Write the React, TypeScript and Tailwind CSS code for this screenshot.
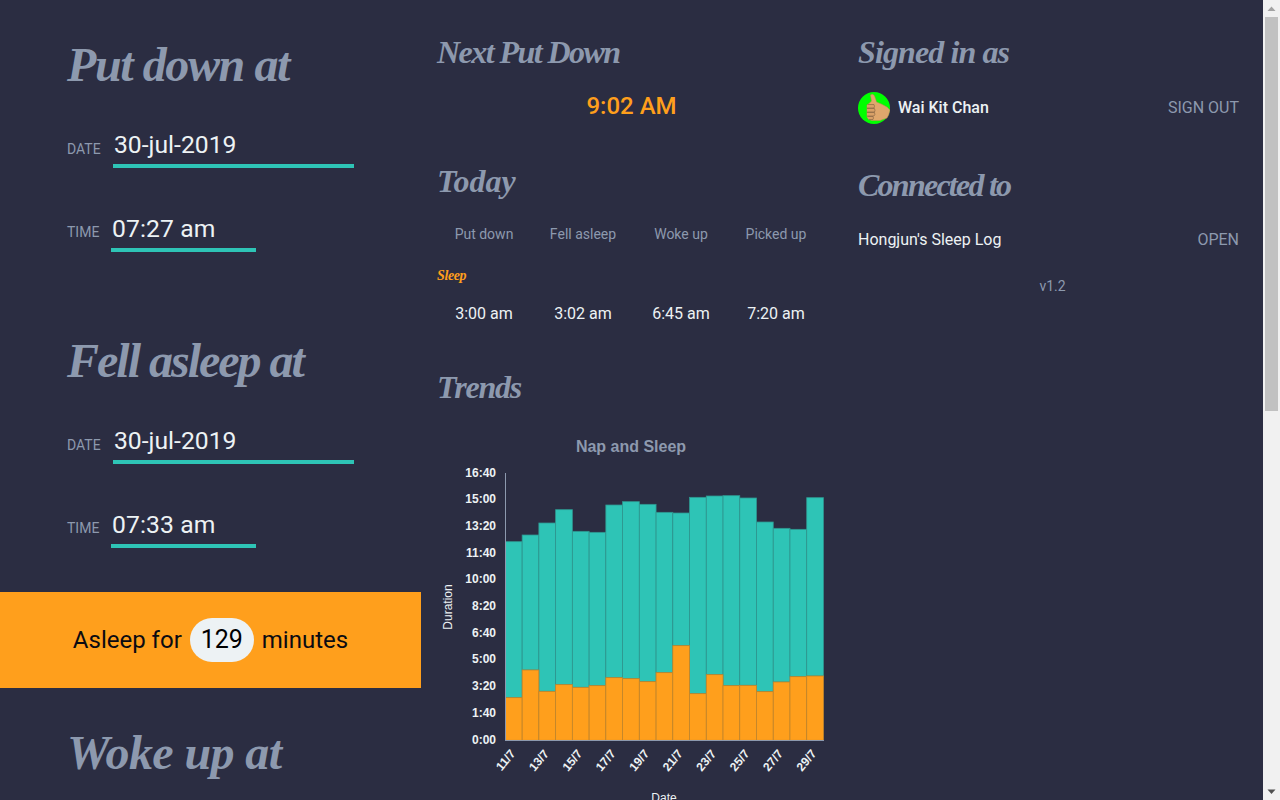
const heading = { fontFamily: '"Liberation Serif", serif' };
const body = { fontFamily: 'Roboto, sans-serif' };

const oranges = [803, 720, 784, 764, 772, 767, 743, 746, 755, 728, 647, 791, 734, 767, 766, 785, 756, 740, 738];
const totals = [335, 315, 279, 239, 304, 307, 225, 215, 223, 247, 249, 202, 198, 197, 204, 276, 295, 298, 203];
const yTicks = ['16:40', '15:00', '13:20', '11:40', '10:00', '8:20', '6:40', '5:00', '3:20', '1:40', '0:00'];
const xTicks = ['11/7', '13/7', '15/7', '17/7', '19/7', '21/7', '23/7', '25/7', '27/7', '29/7'];

function Chart() {
  const toY = (z: number) => 430 + z / 3;
  const left = 505.4;
  const w = 16.74;
  const base = 740.3;
  return (
    <svg width="390" height="400" viewBox="437 430 390 400" className="block mt-[19px]" style={{ fontFamily: '"Liberation Sans", sans-serif' }}>
      <text x="631" y="452" textAnchor="middle" fontSize="16" fontWeight="700" fill="#8d99ae">Nap and Sleep</text>
      {totals.map((t, i) => (
        <rect key={i} x={left + i * w} y={toY(t)} width={w} height={toY(oranges[i]) - toY(t)} fill="#2ec4b6" stroke="#2f968f" strokeWidth="0.8" />
      ))}
      {oranges.map((t, i) => (
        <rect key={i} x={left + i * w} y={toY(t)} width={w} height={base - toY(t)} fill="#ff9f1c" stroke="#c1862c" strokeWidth="0.8" />
      ))}
      <line x1="505.5" y1="473" x2="505.5" y2="740" stroke="#8d99ae" strokeWidth="1" />
      <line x1="505" y1="740.5" x2="824" y2="740.5" stroke="#8d99ae" strokeWidth="1" />
      {yTicks.map((t, i) => (
        <text key={t} x="496" y={Math.floor(477 + i * 26.7)} textAnchor="end" fontSize="12" fontWeight="700" fill="#edf2f4">{t}</text>
      ))}
      {xTicks.map((t, i) => {
        const x = 516 + i * 33.45;
        return (
          <text key={t} x={x} y="754" textAnchor="end" fontSize="12" fontWeight="700" fill="#edf2f4" transform={`rotate(-50 ${x} 754)`}>{t}</text>
        );
      })}
      <text x="452" y="607" textAnchor="middle" fontSize="12" fill="#edf2f4" transform="rotate(-90 452 607)">Duration</text>
      <text x="664" y="802" textAnchor="middle" fontSize="12" fill="#edf2f4">Date</text>
    </svg>
  );
}

function Avatar() {
  return (
    <svg width="32" height="32" viewBox="0 0 32 32" className="shrink-0">
      <circle cx="16" cy="16" r="16" fill="#00ff00" />
      <path d="M12.5 3 Q15 1 16.5 4 Q18 8 18.5 10 Q24 12 29 15 L32 18 Q31 23 29 26 L22 28.5 L14 28.5 Q10 28 9 25 L9 13 Q12 11 13.5 9 Z" fill="#dfa76c" stroke="#b98a55" strokeWidth="0.5" />
      <path d="M9.5 12.5 L16 12.5 Q17 14.5 16 16 L9 16 M9 16.5 L16.5 16.5 Q17.5 18.5 16.5 20 L9 20 M9 20.5 L16.5 20.5 Q17.5 22.5 16 24 L9 24 M9.5 24.5 L15 24.5 Q16 26 15 27.5 L11 27.5" fill="#d8a067" stroke="#80603f" strokeWidth="0.6" />
    </svg>
  );
}

function Section({ title, tracking, dateV, timeV, mb }: { title: string; tracking: string; dateV: string; timeV: string; mb: string }) {
  return (
    <section className={`px-[67px] ${mb}`}>
      <h1 className={`text-5xl h-[72px] leading-[72px] font-bold italic text-[#8d99ae] whitespace-nowrap ${tracking}`} style={heading}>{title}</h1>
      <div className="mt-6 flex items-end h-[43px]">
        <span className="w-[46px] text-sm leading-5 mb-[9px] text-[#8d99ae] shrink-0">DATE</span>
        <div className="w-[241px] pl-px h-[43px] border-b-4 border-[#2ec4b6] text-[24.7px] leading-[40px] text-[#edf2f4]">{dateV}</div>
      </div>
      <div className="mt-[41px] flex items-end h-[43px]">
        <span className="w-[44px] text-sm leading-5 mb-[10px] text-[#8d99ae] shrink-0">TIME</span>
        <div className="w-[145px] pl-px h-[43px] border-b-4 border-[#2ec4b6] text-[24.7px] leading-[40px] tracking-[0.1px] text-[#edf2f4]">{timeV}</div>
      </div>
    </section>
  );
}

function H2({ children, className = '' }: { children: string; className?: string }) {
  return <h2 className={`text-[32px] h-12 leading-[48px] font-bold italic text-[#8d99ae] whitespace-nowrap ${className}`} style={heading}>{children}</h2>;
}

function Scrollbar() {
  return (
    <div className="fixed top-0 right-0 w-[17px] h-screen bg-[#f1f1f1] flex flex-col">
      <svg width="17" height="17" viewBox="0 0 17 17" className="block shrink-0">
        <path d="M8.5 6.5 L12.5 11 L4.5 11 Z" fill="#a3a3a3" />
      </svg>
      <div className="ml-[2px] w-[13px] h-[394px] bg-[#c1c1c1]" />
      <svg width="17" height="17" viewBox="0 0 17 17" className="block shrink-0 mt-auto">
        <path d="M8.5 11 L12.5 6.5 L4.5 6.5 Z" fill="#505050" />
      </svg>
    </div>
  );
}

export default function App() {
  return (
    <div className="w-[1263px] grid grid-cols-3 min-h-[1559px] bg-[#2b2d42] text-[#edf2f4]" style={body}>
      <div className="pt-[29px]">
        <Section title="Put down at" tracking="tracking-[-1.4px]" dateV="30-jul-2019" timeV="07:27 am" mb="mb-[73px]" />
        <Section title="Fell asleep at" tracking="tracking-[-2px]" dateV="30-jul-2019" timeV="07:33 am" mb="mb-11" />
        <div className="h-24 bg-[#ff9f1c] flex items-center justify-center gap-2 text-2xl text-[#0b0b12]">
          <span>Asleep for</span>
          <span className="h-11 w-16 rounded-full bg-[#edf2f4] flex items-center justify-center text-black text-[25px]">129</span>
          <span>minutes</span>
        </div>
        <div className="mt-[29px]">
          <Section title="Woke up at" tracking="tracking-[-0.6px]" dateV="30-jul-2019" timeV="08:58 am" mb="mb-[73px]" />
          <Section title="Picked up at" tracking="tracking-[-1px]" dateV="30-jul-2019" timeV="09:02 am" mb="mb-11" />
        </div>
      </div>

      <div className="pt-7 pl-4">
        <H2 className="tracking-[-1.55px]">Next Put Down</H2>
        <div className="mt-[14px] h-8 leading-8 w-[389px] text-center text-2xl font-medium text-[#ff9f1c]">9:02 AM</div>
        <H2 className="mt-[35px]">Today</H2>
        <div className="mt-[17px] grid grid-cols-[94px_104px_92px_98px] text-sm leading-6 text-center text-[#8d99ae]">
          <span>Put down</span>
          <span>Fell asleep</span>
          <span>Woke up</span>
          <span>Picked up</span>
        </div>
        <div className="mt-[18px] h-6 leading-6 text-sm font-bold italic text-[#ff9f1c] tracking-[-0.4px]" style={heading}>Sleep</div>
        <div className="mt-[14px] grid grid-cols-[94px_104px_92px_98px] text-base leading-6 text-center">
          <span>3:00 am</span>
          <span>3:02 am</span>
          <span>6:45 am</span>
          <span>7:20 am</span>
        </div>
        <H2 className="mt-[37px] tracking-[-1.2px]">Trends</H2>
        <Chart />
      </div>

      <div className="pt-7 pl-4 pr-6">
        <H2 className="tracking-[-0.9px]">Signed in as</H2>
        <div className="mt-4 h-8 flex items-center">
          <Avatar />
          <span className="ml-2 font-medium text-base">Wai Kit Chan</span>
          <span className="ml-auto text-base text-[#8d99ae]">SIGN OUT</span>
        </div>
        <H2 className="mt-[37px] tracking-[-1.75px]">Connected to</H2>
        <div className="mt-[19px] h-6 leading-6 flex items-center">
          <span className="text-base">Hongjun's Sleep Log</span>
          <span className="ml-auto text-base text-[#8d99ae]">OPEN</span>
        </div>
        <div className="mt-6 -ml-4 -mr-6 h-5 leading-5 text-sm text-center text-[#8d99ae]">v1.2</div>
      </div>
      <Scrollbar />
    </div>
  );
}
